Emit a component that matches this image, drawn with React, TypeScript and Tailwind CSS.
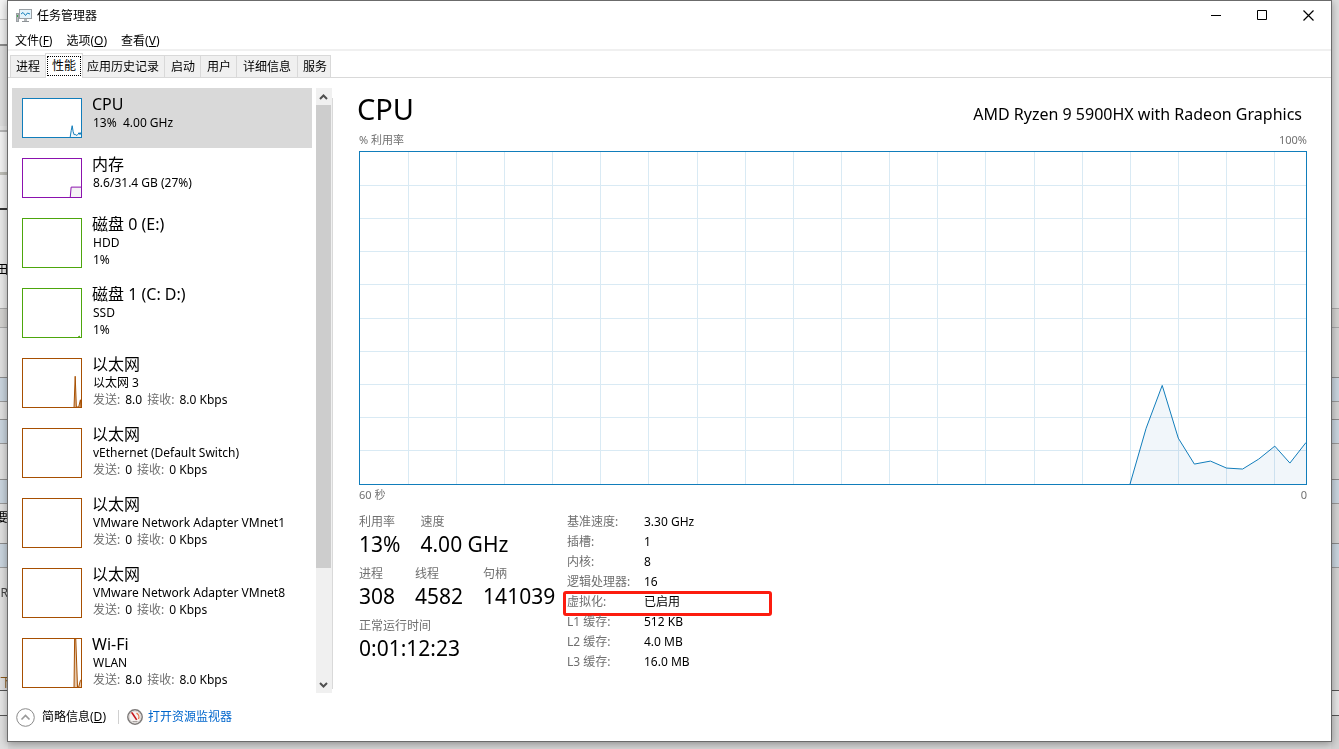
import { useState } from 'react';
import type { ReactNode } from 'react';
import { clsx } from 'clsx';

type Point = [number, number];

// Points are percentages of the graph's width and height, measured from the bottom left
const cpuHistory: Point[] = [
  [81.4, 0],
  [83.1, 16.8],
  [84.8, 29.7],
  [86.5, 13.8],
  [88.2, 6],
  [89.9, 6.9],
  [91.6, 4.8],
  [93.3, 4.5],
  [95, 7.5],
  [96.7, 11.4],
  [98.3, 6.3],
  [100, 12.5],
];

const colors = {
  cpu: '#117dbb',
  memory: '#8b12ae',
  disk: '#4da60c',
  network: '#a74f01',
};

type Resource = {
  id: string;
  name: string;
  color: string;
  fill?: string;
  details: string[];
  traffic?: [string, string];
  history: Point[];
  short?: boolean;
};

const resources: Resource[] = [
  { id: 'cpu', name: 'CPU', color: colors.cpu, fill: '#f1f6fa', details: ['13%  4.00 GHz'], history: cpuHistory, short: true },
  { id: 'memory', name: '内存', color: colors.memory, fill: '#f4f2f4', details: ['8.6/31.4 GB (27%)'], history: [[81.5, 0], [83, 26], [100, 26]], short: true },
  { id: 'disk0', name: '磁盘 0 (E:)', color: colors.disk, details: ['HDD', '1%'], history: [] },
  { id: 'disk1', name: '磁盘 1 (C: D:)', color: colors.disk, details: ['SSD', '1%'], history: [[95, 0], [97, 2], [98, 0]] },
  { id: 'eth3', name: '以太网', color: colors.network, fill: '#d9ae86', details: ['以太网 3'], traffic: ['8.0', '8.0 Kbps'], history: [[88, 0], [90, 64], [92, 0], [96, 0], [99, 15], [100, 0]] },
  { id: 'vether', name: '以太网', color: colors.network, details: ['vEthernet (Default Switch)'], traffic: ['0', '0 Kbps'], history: [] },
  { id: 'vmnet1', name: '以太网', color: colors.network, details: ['VMware Network Adapter VMnet1'], traffic: ['0', '0 Kbps'], history: [] },
  { id: 'vmnet8', name: '以太网', color: colors.network, details: ['VMware Network Adapter VMnet8'], traffic: ['0', '0 Kbps'], history: [] },
  { id: 'wifi', name: 'Wi-Fi', color: colors.network, fill: '#e3c4a5', details: ['WLAN'], traffic: ['8.0', '8.0 Kbps'], history: [[88, 0], [89, 100], [91, 100], [94, 0], [96, 0], [99, 14], [100, 14]] },
];

const tabs = [
  { label: '进程', className: 'px-[5px]' },
  { label: '性能', className: 'px-[5px]' },
  { label: '应用历史记录', className: 'px-[5px]' },
  { label: '启动', className: 'pl-[6px] pr-[5px]' },
  { label: '用户', className: 'pl-[6px] pr-[5px]' },
  { label: '详细信息', className: 'px-[6px]' },
  { label: '服务', className: 'pl-[5px] pr-[3px]' },
];

const menus = [
  { label: '文件', hotkey: 'F' },
  { label: '选项', hotkey: 'O' },
  { label: '查看', hotkey: 'V' },
];

const liveStats = [
  [{ label: '利用率', value: '13%' }, { label: '速度', value: '4.00 GHz' }],
  [{ label: '进程', value: '308' }, { label: '线程', value: '4582' }, { label: '句柄', value: '141039' }],
  [{ label: '正常运行时间', value: '0:01:12:23' }],
];

const facts = [
  { label: '基准速度:', value: '3.30 GHz' },
  { label: '插槽:', value: '1' },
  { label: '内核:', value: '8' },
  { label: '逻辑处理器:', value: '16' },
  { label: '虚拟化:', value: '已启用', marked: true },
  { label: 'L1 缓存:', value: '512 KB' },
  { label: 'L2 缓存:', value: '4.0 MB' },
  { label: 'L3 缓存:', value: '16.0 MB' },
];

// Rows of the document that lies under the window
const sharedBands = [
  'h-5 bg-[#d3d2d0] border-y border-[#a9a9a9]',
  'h-[49px]',
  'h-[25px] bg-[#c9d4de] border-t border-b border-t-[#8c8c8c] border-b-[#9a9a9a]',
  'h-[17px]',
  'h-[25px] bg-[#c9d4de] border-t border-b border-t-[#8c8c8c] border-b-[#9a9a9a]',
  'h-[35px]',
  'h-[25px] bg-[#c9d4de] border-t border-b border-t-[#8c8c8c] border-b-[#9a9a9a]',
  'h-[39px]',
  'h-[25px] bg-[#c9d4de] border-t border-b border-t-[#8c8c8c] border-b-[#9a9a9a]',
  'h-[122px]',
  'h-[26px] bg-[#e6e6e6] border-y border-[#555555]',
  'flex-1',
];

const leftBands = [
  'h-[19px] bg-[#f4f4f4]',
  'h-[25px] bg-[#efefef] border-t border-[#c4c4c4]',
  'h-[82px] bg-[#dcdcdc] border-t-2 border-[#8a8a8a]',
  'h-[6px] bg-[#e4e4e4] border-b-2 border-[#b5b5b5]',
  'h-[40px] bg-[#f1f1f1]',
  'h-[3px] bg-[#bdbdb6]',
  'h-[35px] bg-[#ededed] border-b-2 border-[#333333]',
  'h-[98px] bg-[#e8e8e8]',
];

function Backdrop() {
  return (
    <div className="absolute inset-0 flex justify-between overflow-hidden bg-[#d8d8d8]" aria-hidden="true">
      <div className="relative flex w-2 flex-col bg-[#dfdfdf]">
        {leftBands.concat(sharedBands).map((band, i) => (
          <div key={i} className={clsx('shrink-0', band)} />
        ))}
        <span className="absolute right-0 top-[262px] text-xs leading-4 text-black">田</span>
        <span className="absolute right-0 top-[510px] text-xs leading-4 text-black">要</span>
        <span className="absolute right-0 top-[585px] text-xs leading-4 text-[#444444]">R</span>
        <span className="absolute left-0 top-[675px] text-xs leading-4 text-[#8a5a1c]">下</span>
      </div>
      <div className="flex w-2 flex-col overflow-hidden bg-[#d3d3d3]">
        <div className="h-[308px] shrink-0 bg-[#dedede]" />
        {sharedBands.map((band, i) => (
          <div key={i} className={clsx('shrink-0', band)} />
        ))}
      </div>
    </div>
  );
}

function HistoryPath({ points, color, fill }: { points: Point[]; color: string; fill?: string }) {
  if (points.length === 0) return null;
  const line = points.map(([x, y]) => `${x},${100 - y}`).join(' ');
  const lastX = points[points.length - 1][0];

  return (
    <>
      <polygon points={`${line} ${lastX},100 ${points[0][0]},100`} fill={fill ?? 'none'} fillOpacity={0.9} />
      <polyline points={line} fill="none" stroke={color} strokeWidth={1} vectorEffect="non-scaling-stroke" />
    </>
  );
}

function MiniGraph({ resource }: { resource: Resource }) {
  return (
    <span
      className={clsx('mt-[10px] block w-[60px] shrink-0 border bg-white', resource.short ? 'h-10' : 'h-[50px]')}
      style={{ borderColor: resource.color }}
    >
      <svg viewBox="0 0 100 100" preserveAspectRatio="none" className="block h-full w-full">
        <HistoryPath points={resource.history} color={resource.color} fill={resource.fill} />
      </svg>
    </span>
  );
}

function CpuGraph() {
  const columns = Array.from({ length: 19 }, (_, i) => 5.09 * (i + 1));
  const rows = Array.from({ length: 9 }, (_, i) => 10 * (i + 1));

  return (
    <div className="min-h-0 flex-1 border border-[#117dbb]">
      <svg viewBox="0 0 100 100" preserveAspectRatio="none" className="block h-full w-full">
        <g stroke="#d9eaf4" shapeRendering="crispEdges">
          {columns.map((x) => (
            <line key={x} x1={x} x2={x} y1={0} y2={100} vectorEffect="non-scaling-stroke" />
          ))}
          {rows.map((y) => (
            <line key={y} x1={0} x2={100} y1={y} y2={y} vectorEffect="non-scaling-stroke" />
          ))}
        </g>
        <g style={{ mixBlendMode: 'multiply' }}>
          <HistoryPath points={cpuHistory} color={colors.cpu} fill="#eff5fa" />
        </g>
      </svg>
    </div>
  );
}

function AppIcon() {
  return (
    <svg width="16" height="16" viewBox="0 0 16 16" aria-hidden="true">
      <rect x="0.5" y="5.5" width="2" height="8" fill="#b9bdc1" stroke="#9a9fa3" />
      <rect x="1" y="7" width="1" height="2" fill="#3da64a" />
      <rect x="3.5" y="1.5" width="12" height="9" fill="#e3f3fb" stroke="#9aa0a5" />
      <path d="M5 6 L7 4.5 L9.5 7.5 L11.5 5 L14 6" fill="none" stroke="#1681bd" />
      <rect x="8" y="11" width="3" height="2" fill="#b4b8bb" />
      <rect x="6" y="13" width="7" height="1" fill="#8d9296" />
    </svg>
  );
}

function GaugeIcon() {
  return (
    <svg width="16" height="16" viewBox="0 0 16 16" aria-hidden="true">
      <circle cx="8" cy="8" r="7.2" fill="#f7f4f3" stroke="#7d7a79" strokeWidth="1.5" />
      <circle cx="8" cy="8" r="5.8" fill="none" stroke="#d6d0ce" strokeWidth="0.8" />
      <path d="M9.5 4.2 A4.4 4.4 0 0 1 11.5 10" fill="none" stroke="#e5734a" strokeWidth="1.3" />
      <path d="M3.8 3.6 L5.6 3.2 L10.4 10.6 L9 11.2 Z" fill="#c5161d" />
      <path d="M5.5 12.5 h5" stroke="#a8a3a1" strokeWidth="1" />
    </svg>
  );
}

function WindowButton({ label, children }: { label: string; children: ReactNode }) {
  return (
    <button type="button" aria-label={label} className="flex h-7 w-[46px] items-center justify-center hover:bg-[#e5e5e5]">
      <svg width="11" height="11" viewBox="0 0 11 11" fill="none" stroke="#000000">
        {children}
      </svg>
    </button>
  );
}

function TitleBar() {
  return (
    <header className="flex h-[30px] shrink-0 items-start justify-between">
      <div className="flex h-[30px] items-center gap-[5px] pl-2">
        <AppIcon />
        <h1 className="text-xs">任务管理器</h1>
      </div>
      <div className="flex">
        <WindowButton label="最小化">
          <path d="M0 5.5 h10" />
        </WindowButton>
        <WindowButton label="最大化">
          <path d="M0.5 0.5 h9 v9 h-9 Z" />
        </WindowButton>
        <WindowButton label="关闭">
          <path d="M0.5 0.5 L10.5 10.5 M10.5 0.5 L0.5 10.5" strokeWidth="1.2" />
        </WindowButton>
      </div>
    </header>
  );
}

function Scrollbar() {
  return (
    <div className="flex w-4 shrink-0 flex-col bg-[#f0f0f0] pr-px">
      <button type="button" aria-label="向上滚动" className="flex h-[17px] items-center justify-center">
        <svg width="9" height="6" viewBox="0 0 9 6" fill="none" stroke="#505050" strokeWidth="2">
          <path d="M1 5 L4.5 1.5 L8 5" />
        </svg>
      </button>
      <div className="min-h-0 flex-1">
        <div className="h-[81%] bg-[#cdcdcd]" />
      </div>
      <button type="button" aria-label="向下滚动" className="flex h-[17px] items-center justify-center">
        <svg width="9" height="6" viewBox="0 0 9 6" fill="none" stroke="#505050" strokeWidth="2">
          <path d="M1 1 L4.5 4.5 L8 1" />
        </svg>
      </button>
    </div>
  );
}

export default function App() {
  const [activeTab, setActiveTab] = useState('性能');
  const [selected, setSelected] = useState('cpu');

  return (
    <div className="relative flex h-screen flex-col overflow-hidden px-[7px] pb-[7px] font-['Noto_Sans','Noto_Sans_CJK_SC',sans-serif] text-xs text-black">
      <Backdrop />

      <div className="relative flex min-h-0 flex-1 flex-col border border-[#6b6b6b] bg-white shadow-[0_2px_8px_rgba(0,0,0,0.35)]">
        <TitleBar />

        {/* Menu */}
        <nav className="flex h-5 shrink-0 items-center gap-[14px] border-b-2 border-[#f0f0f0] pl-[7px] pt-[2px] leading-4">
          {menus.map((menu) => (
            <button key={menu.hotkey} type="button">
              {menu.label}(<span className="underline">{menu.hotkey}</span>)
            </button>
          ))}
        </nav>

        {/* Tabs */}
        <div role="tablist" className="flex h-[27px] shrink-0 items-end border-b border-[#d9d9d9] pl-[2px]">
          {tabs.map((tab) => {
            const isActive = tab.label === activeTab;

            return (
              <button
                key={tab.label}
                type="button"
                role="tab"
                aria-selected={isActive}
                onClick={() => setActiveTab(tab.label)}
                className={clsx(
                  'border-[#d9d9d9]',
                  isActive
                    ? 'relative -mx-px -mb-px h-[25px] border-x border-t bg-white px-px pb-[2px] pt-px'
                    : clsx('h-[22px] border-r border-t bg-[#f0f0f0] first:border-l', tab.className)
                )}
              >
                <span className={clsx('block', isActive && 'border border-dotted border-black px-1 leading-[18px]')}>
                  {tab.label}
                </span>
              </button>
            );
          })}
        </div>

        <div className="flex min-h-0 flex-1">
          {/* Resource list */}
          <aside className="flex shrink-0 gap-1 pl-1 pt-[10px]">
            <div className="w-[300px] overflow-hidden">
              {resources.map((resource) => (
                <button
                  key={resource.id}
                  type="button"
                  onClick={() => setSelected(resource.id)}
                  className={clsx(
                    'flex w-full items-start gap-[10px] pl-[10px] text-left',
                    resource.short ? 'h-[60px]' : 'h-[70px]',
                    selected === resource.id && 'bg-[#d9d9d9]'
                  )}
                >
                  <MiniGraph resource={resource} />
                  <span className="block whitespace-pre pt-[6px] leading-[17px]">
                    <span className="block text-base leading-5">{resource.name}</span>
                    {resource.details.map((detail) => (
                      <span key={detail} className="block pl-px">{detail}</span>
                    ))}
                    {resource.traffic && (
                      <span className="flex gap-[5px] pl-px">
                        <span className="text-[#707070]">发送:</span>
                        <span>{resource.traffic[0]}</span>
                        <span className="text-[#707070]">接收:</span>
                        <span>{resource.traffic[1]}</span>
                      </span>
                    )}
                  </span>
                </button>
              ))}
            </div>
            <Scrollbar />
          </aside>
          <div className="mb-1 mt-5 w-px bg-[#d9d9d9]" />

          {/* CPU details */}
          <main className="flex min-w-0 flex-1 flex-col px-6 pb-[21px] pt-[10px]">
            <div className="flex h-11 shrink-0 items-baseline justify-between pr-[5px]">
              <h2 className="text-[29px] leading-[42px]">CPU</h2>
              <p className="text-base">AMD Ryzen 9 5900HX with Radeon Graphics</p>
            </div>

            <div className="flex min-h-0 flex-1 flex-col pl-[2px]">
              <div className="mb-[3px] flex justify-between text-[11px] leading-4 text-[#707070]">
                <span>% 利用率</span>
                <span>100%</span>
              </div>
              <CpuGraph />
              <div className="mt-[2px] flex justify-between text-[11px] leading-4 text-[#707070]">
                <span>60 秒</span>
                <span>0</span>
              </div>

              <div className="mt-[9px] flex">
                <div className="flex w-[208px] shrink-0 flex-col gap-2 pt-px">
                  {liveStats.map((row) => (
                    <dl key={row[0].label} className="flex gap-5">
                      {row.map((stat) => (
                        <div key={stat.label}>
                          <dt className="leading-[18px] text-[#707070]">{stat.label}</dt>
                          <dd className="text-[21px] leading-[26px]">{stat.value}</dd>
                        </div>
                      ))}
                    </dl>
                  ))}
                </div>

                <dl className="leading-5">
                  {facts.map((fact) => (
                    <div key={fact.label} className="relative flex">
                      <dt className="w-[77px] text-[#707070]">{fact.label}</dt>
                      <dd>{fact.value}</dd>
                      {fact.marked && (
                        <span className="absolute -left-1 -top-px h-[25px] w-[209px] rounded-[3px] border-[3px] border-[#fc1c0f]" />
                      )}
                    </div>
                  ))}
                </dl>
              </div>
            </div>
          </main>
        </div>

        {/* Footer */}
        <footer className="flex h-12 shrink-0 items-center pl-2">
          <button type="button" className="flex items-center gap-[7px]">
            <svg width="19" height="19" viewBox="0 0 19 19" fill="none" stroke="#8a8a8a" aria-hidden="true">
              <circle cx="9.5" cy="9.5" r="8.8" />
              <path d="M5.5 11.5 L9.5 7.5 L13.5 11.5" stroke="#999999" strokeWidth="1.6" />
            </svg>
            <span>
              简略信息(<span className="underline">D</span>)
            </span>
          </button>
          <div className="ml-3 mr-2 h-[14px] w-px bg-[#d0d0d0]" />
          <a href="#resource-monitor" className="flex items-center gap-[5px] text-[#0066cc]">
            <GaugeIcon />
            打开资源监视器
          </a>
        </footer>
      </div>
    </div>
  );
}
